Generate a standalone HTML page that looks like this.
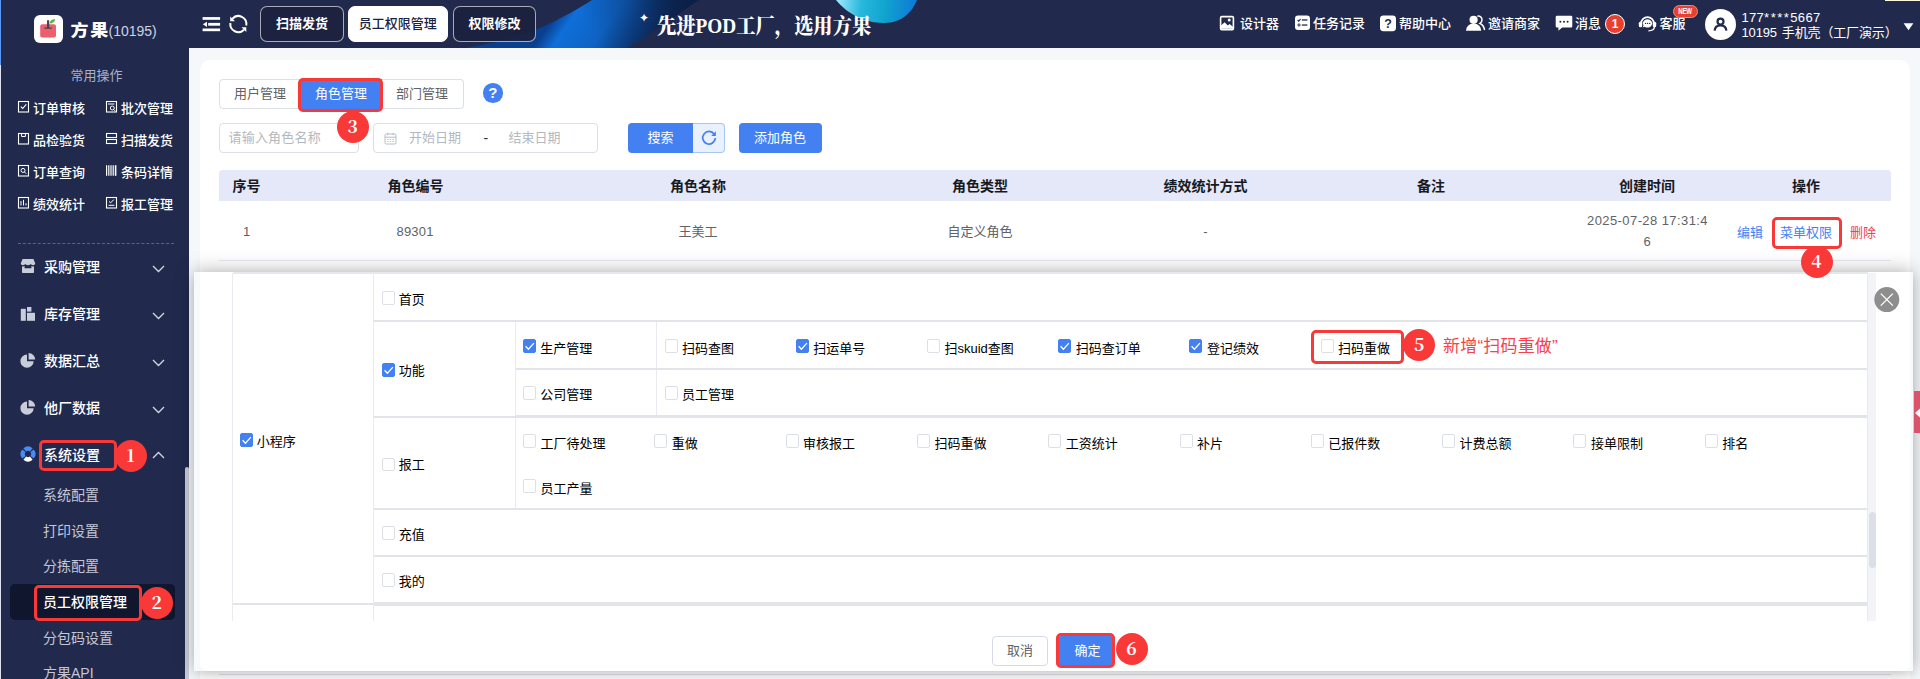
<!DOCTYPE html>
<html lang="zh-CN">
<head>
<meta charset="utf-8">
<title>方果</title>
<style>
*{box-sizing:border-box;margin:0;padding:0}
html,body{width:1920px;height:679px;overflow:hidden}
body{position:relative;background:#f6f7fb;font-family:"Liberation Sans","Noto Sans CJK SC",sans-serif;font-size:13px;color:#303133}
.abs{position:absolute}
.t{position:absolute;white-space:nowrap;line-height:20px;height:20px}
/* header */
#hd{position:absolute;left:0;top:0;width:1920px;height:48px;background:#212a4d;overflow:hidden}
#sb{position:absolute;left:0;top:48px;width:189px;height:631px;background:#212a4d;overflow:hidden}
.htab{position:absolute;top:6px;height:36px;border:1px solid rgba(255,255,255,.62);border-radius:7px;background:#1c2240;color:#fff;font-weight:700;font-size:13px;line-height:34px;text-align:center}
.htab.on{background:#fff;color:#1b2140;border-color:#fff;font-weight:500}
.hi{position:absolute;top:14px;height:20px;line-height:20px;color:#fff;font-size:13px;white-space:nowrap;font-weight:500}
/* sidebar */
.q{position:absolute;color:#fff;font-size:13px;font-weight:500;line-height:20px;height:20px;white-space:nowrap}
.m1{position:absolute;left:44px;color:#fff;font-size:14px;font-weight:500;line-height:20px;height:20px;white-space:nowrap}
.m2{position:absolute;left:43px;color:#c3c7d6;font-size:14px;line-height:20px;height:20px;white-space:nowrap}
/* card */
#card{position:absolute;left:200px;top:60px;width:1710px;height:640px;background:#fff;border-radius:10px}
.tab{position:absolute;top:79px;height:30px;line-height:28px;font-size:13px;color:#606266;text-align:center;border:1px solid #dcdfe6;background:#fff}
.inp{position:absolute;top:123px;height:30px;border:1px solid #dcdfe6;border-radius:4px;background:#fff}
.ph{position:absolute;color:#b4b8c0;font-size:13px;line-height:28px;top:0;white-space:nowrap}
.btn{position:absolute;top:123px;height:30px;line-height:30px;background:#4381f3;color:#fff;font-size:13px;text-align:center;border-radius:4px}
.th{position:absolute;top:176px;height:20px;line-height:20px;font-size:14px;font-weight:700;color:#17191f;white-space:nowrap}
.td{position:absolute;height:20px;line-height:20px;font-size:13px;color:#606266;white-space:nowrap}
.c{transform:translateX(-50%)}
/* dialog */
#dlg{position:absolute;left:194px;top:272px;width:1719px;height:399px;background:#fff;border-radius:0;box-shadow:0 -1px 18px rgba(0,0,0,.3),0 4px 10px rgba(0,0,0,.06)}
.ln{position:absolute;background:#e5e7ed}
.cb{position:absolute;width:13px;height:13.500px;border:1px solid #dcdfe6;border-radius:2px;background:#fff}
.cb.on{background:#4381f3;border-color:#4381f3;height:14px}
.lb{position:absolute;height:20px;line-height:20px;font-size:13px;color:#000;white-space:nowrap}
/* annotations */
.rb{position:absolute;border:3.800px solid #f93838;border-radius:5px}
.rc{position:absolute;width:32px;height:32px;border-radius:50%;background:#f93838;color:#fff;font-family:"Noto Serif CJK SC","Liberation Serif",serif;font-weight:700;font-size:17.500px;line-height:30px;text-align:center}
</style>
</head>
<body>
<div id="hd">
<svg class="abs" style="left:440px;top:0" width="500" height="48" viewBox="440 0 500 48">
<defs>
<linearGradient id="sw" gradientUnits="userSpaceOnUse" x1="560" y1="8" x2="640" y2="62">
<stop offset="0" stop-color="#0a3f90"/><stop offset=".16" stop-color="#0f6fd8"/><stop offset=".5" stop-color="#0e63c4"/><stop offset=".82" stop-color="#0b3b7e"/><stop offset="1" stop-color="#15274f"/>
</linearGradient>
<linearGradient id="swf" gradientUnits="userSpaceOnUse" x1="600" y1="48" x2="690" y2="0">
<stop offset="0" stop-color="#0a2450" stop-opacity="0"/><stop offset=".45" stop-color="#0a2450" stop-opacity=".3"/><stop offset="1" stop-color="#091f48" stop-opacity=".92"/>
</linearGradient>
<linearGradient id="bl" gradientUnits="userSpaceOnUse" x1="838" y1="0" x2="916" y2="8">
<stop offset="0" stop-color="#9be6fb"/><stop offset=".3" stop-color="#27b9dd"/><stop offset=".62" stop-color="#10a3cd"/><stop offset="1" stop-color="#0f78d8"/>
</linearGradient>
</defs>
<path d="M466 48 C500 42 522 36 540 28 C562 18 578 9 592 0 L699 0 C684 10 668 22 656 30 C646 37 636 43 627 48 Z" fill="url(#sw)"/>
<path d="M466 48 C500 42 522 36 540 28 C562 18 578 9 592 0 L699 0 C684 10 668 22 656 30 C646 37 636 43 627 48 Z" fill="url(#swf)"/>
<path d="M836 0 C846 12 862 23 884 23 C902 23 912 12 917 0 Z" fill="url(#bl)"/>
</svg>
<div class="abs" style="left:0;top:0;width:1px;height:48px;background:#5b98f5"></div>
<!-- logo -->
<div class="abs" style="left:34px;top:15px;width:29px;height:28px;background:#fff;border-radius:6px"></div>
<svg class="abs" style="left:34px;top:15px" width="29" height="28" viewBox="0 0 29 28">
<rect x="6.2" y="9.2" width="15.8" height="13.4" rx="2" fill="#ee5f6e"/>
<path d="M13 5.2h2.2v7.2h2.6v1.3h-7.4v-1.3h2.6z" fill="#3b484c"/>
<path d="M15.6 8.6c.2-2.6 2-4.4 5.6-4.5c-.2 2.8-2.2 4.6-5.6 4.5z" fill="#5fb548"/>
</svg>
<div class="t" style="left:70.500px;top:18.500px;height:24px;line-height:24px;font-size:18px;font-weight:900;color:#fff;letter-spacing:1.800px;transform:scaleY(.91)">方果</div>
<div class="t" style="left:108.5px;top:21px;font-size:14px;color:#cdd2e4">(10195)</div>
<!-- hamburger -->
<svg class="abs" style="left:202px;top:16px" width="19" height="16" viewBox="0 0 19 16">
<rect x="0.600" y="1.100" width="17.500" height="2.700" fill="#fff"/><rect x="6.200" y="6.900" width="11.900" height="2.800" fill="#fff"/><rect x="0.600" y="12.500" width="17.500" height="2.700" fill="#fff"/><path d="M0.800 8.300L5 5.700v5.200z" fill="#fff"/>
</svg>
<!-- refresh -->
<svg class="abs" style="left:228px;top:13px" width="22" height="22" viewBox="0 0 22 22">
<g fill="none" stroke="#fff" stroke-width="2">
<path d="M4.300 5.800A8 8 0 0 1 18.200 12.500"/>
<path d="M16 16.700A8 8 0 0 1 2.400 10"/>
</g>
<path d="M2.200 3.400v4.800h4.800z" fill="#fff"/>
<path d="M18.300 19.100v-4.800h-4.800z" fill="#fff"/>
</svg>
<div class="htab" style="left:260px;width:84px">扫描发货</div>
<div class="htab on" style="left:347.5px;width:100.5px">员工权限管理</div>
<div class="htab" style="left:453px;width:83px;background:rgba(27,33,62,.9)">权限修改</div>
<!-- banner text -->
<div class="t" style="left:638.5px;top:8px;font-size:12px;color:#fff">✦</div>
<div class="t" id="bn" style="left:657px;top:10.600px;height:30px;line-height:30px;font-family:'Liberation Serif','Noto Serif CJK SC',serif;font-weight:900;font-size:21px;color:#fff;transform-origin:0 50%;transform:scaleX(.918)">先进POD工厂，选用方果</div>
<!-- 设计器 -->
<svg class="abs" style="left:1219px;top:15px" width="16" height="16" viewBox="0 0 16 16">
<rect x="1.6" y="1.6" width="12.8" height="13" rx="1.2" fill="none" stroke="#fff" stroke-width="1.6"/>
<path d="M2 13.8V10.6l3.6-3.4 3.2 3.4 1.8-1.6 3.6 3v1.8z" fill="#fff"/>
<circle cx="10.2" cy="5" r="1.5" fill="#fff"/>
</svg>
<div class="hi" style="left:1240px">设计器</div>
<!-- 任务记录 -->
<svg class="abs" style="left:1294px;top:15px" width="17" height="16" viewBox="0 0 17 16">
<rect x="1" y="0.5" width="15" height="14.6" rx="3" fill="#fff"/>
<path d="M3.6 5l1.1 1.1 1.9-2" fill="none" stroke="#212a4d" stroke-width="1.1"/>
<rect x="7.8" y="4.3" width="5.6" height="1.3" fill="#212a4d"/>
<circle cx="5" cy="10" r="1.1" fill="none" stroke="#212a4d" stroke-width="1"/>
<rect x="7.8" y="9.4" width="5.6" height="1.3" fill="#212a4d"/>
</svg>
<div class="hi" style="left:1313px">任务记录</div>
<!-- 帮助中心 -->
<svg class="abs" style="left:1379px;top:15px" width="18" height="17" viewBox="0 0 18 17">
<rect x="1" y="0.4" width="16" height="15.8" rx="3.4" fill="#fff"/>
<text x="9" y="12.6" text-anchor="middle" font-family="Liberation Sans,sans-serif" font-weight="700" font-size="12.5" fill="#212a4d">?</text>
</svg>
<div class="hi" style="left:1399px">帮助中心</div>
<!-- 邀请商家 -->
<svg class="abs" style="left:1465px;top:15px" width="21" height="17" viewBox="0 0 21 17">
<path d="M12.4 1.2c2.6-.6 4.6 1.2 4.6 3.6 0 1.700-.9 3-2 3.700 2.200.9 3.900 2.800 4.600 6.500" fill="none" stroke="#fff" stroke-width="1.5"/>
<circle cx="8.6" cy="4.800" r="4.100" fill="#fff"/>
<path d="M1 15.800c.3-4.300 3.300-7.200 7.600-7.200s7.300 2.900 7.600 7.200z" fill="#fff"/>
</svg>
<div class="hi" style="left:1488px">邀请商家</div>
<!-- 消息 -->
<svg class="abs" style="left:1555px;top:15px" width="18" height="17" viewBox="0 0 18 17">
<path d="M2 .8h14a1.300 1.300 0 0 1 1.300 1.300v9.200a1.300 1.300 0 0 1-1.300 1.300H7.200L3.400 15.800V12.600H2A1.300 1.300 0 0 1 .7 11.300V2.100A1.300 1.300 0 0 1 2 .8z" fill="#fff"/>
<circle cx="5.400" cy="6.700" r="1" fill="#212a4d"/><circle cx="9" cy="6.700" r="1" fill="#212a4d"/><circle cx="12.600" cy="6.700" r="1" fill="#212a4d"/>
</svg>
<div class="hi" style="left:1575px">消息</div>
<div class="abs" style="left:1605px;top:14px;width:20px;height:20px;border-radius:50%;background:#e8402f;border:1px solid #fff;color:#fff;font-size:12px;font-weight:700;line-height:18px;text-align:center">1</div>
<!-- 客服 -->
<svg class="abs" style="left:1638px;top:15px" width="19" height="17" viewBox="0 0 19 17">
<path d="M3.200 8.400a6.300 6.300 0 0 1 12.600 0" fill="none" stroke="#fff" stroke-width="1.700"/>
<rect x="0.800" y="6.800" width="3.400" height="5.400" rx="1.500" fill="#fff"/>
<rect x="14.800" y="6.800" width="3.400" height="5.400" rx="1.500" fill="#fff"/>
<path d="M16.400 11.800c0 2.800-2.600 4-6 4" fill="none" stroke="#fff" stroke-width="1.300"/>
<path d="M9.500 4.200a4.600 4.200 0 1 1-2.800 7.500l-2 .9.800-2.200A4.600 4.200 0 0 1 9.500 4.200z" fill="#fff"/>
<circle cx="7.500" cy="8.400" r=".7" fill="#212a4d"/><circle cx="9.600" cy="8.400" r=".7" fill="#212a4d"/><circle cx="11.700" cy="8.400" r=".7" fill="#212a4d"/>
</svg>
<div class="hi" style="left:1659.500px">客服</div>
<div class="abs" style="left:1673px;top:5px;width:24.500px;height:13px;border-radius:7px;background:#e8402f;border:1px solid #f08a7a;color:#fff;font-size:9px;font-weight:700;line-height:11px;text-align:center;letter-spacing:-.3px"><span style="display:inline-block;transform:scaleX(.68)">NEW</span></div>
<div class="abs" style="left:1885px;top:0;width:35px;height:1px;background:#fff7e0"></div>
<!-- avatar -->
<div class="abs" style="left:1705px;top:8.500px;width:31px;height:31px;border-radius:50%;background:#fff"></div>
<svg class="abs" style="left:1705px;top:8.500px" width="31" height="31" viewBox="0 0 31 31">
<circle cx="15.500" cy="12.600" r="3" fill="none" stroke="#212a4d" stroke-width="2.200"/>
<path d="M9.600 21.600c.4-3.400 2.700-5.200 5.900-5.200s5.500 1.800 5.900 5.200" fill="none" stroke="#212a4d" stroke-width="2.200"/>
</svg>
<div class="t" style="left:1741.500px;top:8.300px;font-size:13px;color:#fff;letter-spacing:.3px">177<span style="letter-spacing:1.500px">****</span>5667</div>
<div class="t" style="left:1741.500px;top:22.800px;font-size:13px;color:#fff;word-spacing:1.500px;letter-spacing:-.15px">10195 手机壳（工厂演示）</div>
<svg class="abs" style="left:1903px;top:23px" width="11" height="8" viewBox="0 0 11 8"><path d="M.6.300h9.800L5.500 7.200z" fill="#fff"/></svg>

</div>
<div id="sb">
<div class="abs" style="left:0;top:0;width:1px;height:17px;background:#5b98f5"></div><div class="abs" style="left:0;top:17px;width:1px;height:614px;background:#dfe2ee"></div>
<div class="t c" style="left:96.500px;top:18px;font-size:13px;color:#aab1cb">常用操作</div>
<!-- quick icons : y offsets relative to sidebar (page y - 48) -->
<svg class="abs" style="left:17px;top:52px" width="13" height="13" viewBox="0 0 13 13"><rect x="1.500" y="1.500" width="10" height="10.500" fill="none" stroke="#fff" stroke-width="1.100"/><path d="M3.800 6.600l1.900 1.900 3.600-4.200" fill="none" stroke="#fff" stroke-width="1.100"/></svg>
<div class="q" style="left:33px;top:50.700px">订单审核</div>
<svg class="abs" style="left:105px;top:52px" width="13" height="13" viewBox="0 0 13 13"><rect x="1.500" y="1.500" width="10" height="10.500" fill="none" stroke="#fff" stroke-width="1.100"/><path d="M3 4h6.500" stroke="#fff" stroke-width="1"/><circle cx="7.300" cy="8" r="2" fill="none" stroke="#fff" stroke-width="1"/><path d="M8.800 9.600l1.700 1.700" stroke="#fff" stroke-width="1"/></svg>
<div class="q" style="left:121px;top:50.700px">批次管理</div>

<svg class="abs" style="left:17px;top:84px" width="13" height="13" viewBox="0 0 13 13"><rect x="1.500" y="1.500" width="10" height="10.500" fill="none" stroke="#fff" stroke-width="1.100"/><path d="M4.600 1.500v3h3.800v-3" fill="none" stroke="#fff" stroke-width="1"/></svg>
<div class="q" style="left:33px;top:82.700px">品检验货</div>
<svg class="abs" style="left:105px;top:84px" width="13" height="13" viewBox="0 0 13 13"><rect x="1.500" y="1.500" width="10" height="4" fill="none" stroke="#fff" stroke-width="1.100"/><rect x="1.500" y="7.500" width="10" height="4" fill="none" stroke="#fff" stroke-width="1.100"/></svg>
<div class="q" style="left:121px;top:82.700px">扫描发货</div>

<svg class="abs" style="left:17px;top:116px" width="13" height="13" viewBox="0 0 13 13"><rect x="1.500" y="1.500" width="10" height="10.500" fill="none" stroke="#fff" stroke-width="1.100"/><circle cx="6" cy="6.400" r="2" fill="none" stroke="#fff" stroke-width="1"/><path d="M7.500 8l1.700 1.700" stroke="#fff" stroke-width="1"/></svg>
<div class="q" style="left:33px;top:114.700px">订单查询</div>
<svg class="abs" style="left:105px;top:116px" width="13" height="13" viewBox="0 0 13 13"><path d="M1.600 1.200v10.600M3.800 1.200v10.600M6 1.200v10.600M8.200 1.200v10.600" stroke="#fff" stroke-width="1.200"/><path d="M10.600 1.200v10.600" stroke="#fff" stroke-width="1.600"/></svg>
<div class="q" style="left:121px;top:114.700px">条码详情</div>

<svg class="abs" style="left:17px;top:148px" width="13" height="13" viewBox="0 0 13 13"><rect x="1.500" y="1.500" width="10" height="10.500" fill="none" stroke="#fff" stroke-width="1.100"/><path d="M4 5v4.500M6.500 3.800v5.700M9 7.200v2.300" stroke="#fff" stroke-width="1"/></svg>
<div class="q" style="left:33px;top:146.700px">绩效统计</div>
<svg class="abs" style="left:105px;top:148px" width="13" height="13" viewBox="0 0 13 13"><rect x="1.500" y="1.500" width="10" height="10.500" fill="none" stroke="#fff" stroke-width="1.100"/><path d="M4 5.400l1.600 1.500 3.200-3.300" fill="none" stroke="#fff" stroke-width="1"/><path d="M3.600 9.300h5.800" stroke="#fff" stroke-width="1"/></svg>
<div class="q" style="left:121px;top:146.700px">报工管理</div>

<div class="abs" style="left:18px;top:195px;width:156px;height:0;border-top:1px dashed #5a6388"></div>

<!-- menu -->
<svg class="abs" style="left:20px;top:210px" width="16" height="16" viewBox="0 0 16 16"><path d="M2.600 1h10.800l1.800 4.200c0 1.300-1 2-2.200 2-1 0-1.700-.5-2.200-1.200-.5.700-1.500 1.200-2.800 1.200s-2.300-.5-2.800-1.200C4.700 6.700 4 7.200 3 7.200 1.800 7.200.800 6.500.800 5.200z" fill="#c9ccd9"/><path d="M2 8.400c.3.100.7.100 1 .100.700 0 1.200-.1 1.600-.4v2.200h6.800V8.100c.4.300.9.400 1.600.4.300 0 .7 0 1-.1V14c0 .6-.4 1-1 1H3c-.6 0-1-.4-1-1z" fill="#c9ccd9"/></svg>
<div class="m1" style="top:208.500px">采购管理</div>
<svg class="abs" style="left:20px;top:258px" width="16" height="16" viewBox="0 0 16 16"><rect x="0.800" y="2.800" width="5" height="12" fill="#c9ccd9"/><rect x="7" y="1" width="4.400" height="4.600" fill="#c9ccd9"/><rect x="7" y="6.800" width="8" height="8" fill="#c9ccd9"/></svg>
<div class="m1" style="top:255.500px">库存管理</div>
<svg class="abs" style="left:20px;top:304px" width="16" height="16" viewBox="0 0 16 16"><path d="M7 2.600v6.600h6.600A6.600 6.600 0 1 1 7 2.600z" fill="#c9ccd9"/><path d="M8.600 1a6.600 6.600 0 0 1 6.600 6.600H8.600z" fill="#c9ccd9"/></svg>
<div class="m1" style="top:302.500px">数据汇总</div>
<svg class="abs" style="left:20px;top:351px" width="16" height="16" viewBox="0 0 16 16"><path d="M7 2.600v6.600h6.600A6.600 6.600 0 1 1 7 2.600z" fill="#c9ccd9"/><path d="M8.600 1a6.600 6.600 0 0 1 6.600 6.600H8.600z" fill="#c9ccd9"/></svg>
<div class="m1" style="top:349.500px">他厂数据</div>
<svg class="abs" style="left:19.500px;top:398.400px" width="16" height="16" viewBox="0 0 16 16"><g fill="none" stroke-width="4.300"><path d="M11.270 12.110A5.250 5.250 0 0 1 4.730 12.110" stroke="#fff"/><path d="M3.890 11.270A5.250 5.250 0 0 1 3.890 4.730" stroke="#4a8cf5"/><path d="M4.730 3.890A5.250 5.250 0 0 1 11.270 3.890" stroke="#4a8cf5"/><path d="M12.110 4.730A5.250 5.250 0 0 1 12.110 11.270" stroke="#4a8cf5"/></g></svg>
<div class="m1" style="top:397px">系统设置</div>
<!-- chevrons -->
<svg class="abs" style="left:152px;top:217px" width="13" height="8" viewBox="0 0 13 8"><path d="M1 1l5.500 5.500L12 1" fill="none" stroke="#d5d8e4" stroke-width="1.300"/></svg>
<svg class="abs" style="left:152px;top:264px" width="13" height="8" viewBox="0 0 13 8"><path d="M1 1l5.500 5.500L12 1" fill="none" stroke="#d5d8e4" stroke-width="1.300"/></svg>
<svg class="abs" style="left:152px;top:311px" width="13" height="8" viewBox="0 0 13 8"><path d="M1 1l5.500 5.500L12 1" fill="none" stroke="#d5d8e4" stroke-width="1.300"/></svg>
<svg class="abs" style="left:152px;top:358px" width="13" height="8" viewBox="0 0 13 8"><path d="M1 1l5.500 5.500L12 1" fill="none" stroke="#d5d8e4" stroke-width="1.300"/></svg>
<svg class="abs" style="left:152px;top:403px" width="13" height="8" viewBox="0 0 13 8"><path d="M1 7l5.500-5.500L12 7" fill="none" stroke="#d5d8e4" stroke-width="1.300"/></svg>
<!-- submenu -->
<div class="abs" style="left:10px;top:536px;width:165px;height:36px;border-radius:5px;background:#11162f"></div>
<div class="m2" style="top:437px">系统配置</div>
<div class="m2" style="top:473px">打印设置</div>
<div class="m2" style="top:508px">分拣配置</div>
<div class="m2" style="top:544px;color:#fff;font-weight:500">员工权限管理</div>
<div class="m2" style="top:580px">分包码设置</div>
<div class="m2" style="top:614.500px">方果API</div>
<!-- sidebar scrollbar -->
<div class="abs" style="left:185px;top:419px;width:4px;height:215px;background:#c9ccd6;border-radius:2px 2px 0 0"></div>
</div>
<div id="card"></div>
<!-- tabs -->
<div class="tab" style="left:219px;width:82px;border-radius:4px 0 0 4px">用户管理</div>
<div class="tab" style="left:381px;width:83px;border-radius:0 4px 4px 0;border-left:none">部门管理</div>
<div class="tab" style="left:300px;width:82px;background:#4381f3;border-color:#4381f3;color:#fff">角色管理</div>
<!-- help -->
<div class="abs" style="left:483px;top:83px;width:19.500px;height:19.500px;border-radius:50%;background:#4381f3;color:#fff;font-weight:700;font-size:15px;line-height:20px;text-align:center">?</div>
<!-- inputs -->
<div class="inp" style="left:219px;width:140px"><div class="ph" style="left:8.500px;letter-spacing:.2px">请输入角色名称</div></div>
<div class="inp" style="left:373px;width:225px">
<svg class="abs" style="left:10px;top:7.500px" width="13" height="13" viewBox="0 0 13 13"><rect x="1" y="2" width="11" height="10" rx="1.200" fill="none" stroke="#b9bcc5" stroke-width="1"/><path d="M1 5.200h11M3.800 .8v2.400M9.200 .8v2.400" stroke="#b9bcc5" stroke-width="1"/><path d="M3.200 7.400h1.400M5.800 7.400h1.400M8.400 7.400h1.400M3.200 9.600h1.400M5.800 9.600h1.400M8.400 9.600h1.400" stroke="#b9bcc5" stroke-width="1"/></svg>
<div class="ph" style="left:35px">开始日期</div><div class="ph" style="left:109.500px;color:#303133;font-size:14px">-</div><div class="ph" style="left:134.500px">结束日期</div></div>
<div class="btn" style="left:628px;width:65px;border-radius:4px 0 0 4px">搜索</div>
<div class="btn" style="left:693px;width:32px;border-radius:0 4px 4px 0;background:#e9f0fe;border:1px solid #a9c6fa;border-left:none"></div>
<svg class="abs" style="left:700px;top:129px" width="18" height="18" viewBox="0 0 18 18"><path d="M14.200 5.200A6.300 6.300 0 1 0 15.300 9" fill="none" stroke="#4381f3" stroke-width="1.700"/><path d="M15.900 2.200v4.700h-4.700z" fill="#4381f3"/></svg>
<div class="btn" style="left:738.500px;width:83px">添加角色</div>
<!-- table header -->
<div class="abs" style="left:219px;top:170px;width:1672px;height:31px;background:#e4e8f8;border-radius:4px 4px 0 0"></div>
<div class="th" style="left:232.500px">序号</div>
<div class="th" style="left:387.500px">角色编号</div>
<div class="th c" style="left:698px">角色名称</div>
<div class="th c" style="left:980px">角色类型</div>
<div class="th c" style="left:1205.500px">绩效统计方式</div>
<div class="th c" style="left:1431px">备注</div>
<div class="th c" style="left:1647px">创建时间</div>
<div class="th c" style="left:1806px">操作</div>
<!-- row -->
<div class="td" style="left:243px;top:221.700px">1</div>
<div class="td" style="left:396.500px;top:221.700px;letter-spacing:.2px">89301</div>
<div class="td c" style="left:698px;top:221.500px">王美工</div>
<div class="td c" style="left:980px;top:221.500px">自定义角色</div>
<div class="td c" style="left:1205.500px;top:221.500px">-</div>
<div class="td c" style="left:1647.500px;top:210.500px;letter-spacing:.42px">2025-07-28 17:31:4</div>
<div class="td c" style="left:1647px;top:232px">6</div>
<div class="td c" style="left:1750px;top:223px;color:#4381f3">编辑</div>
<div class="td c" style="left:1806px;top:223px;color:#4381f3">菜单权限</div>
<div class="td c" style="left:1863px;top:223px;color:#f5424c">删除</div>
<div class="abs" style="left:219px;top:260px;width:1672px;height:1px;background:#e6e9f2"></div>
<div class="abs" style="left:219px;top:674px;width:1672px;height:1px;background:#e0e3ec"></div>
<div id="dlg"></div>
<div class="abs" style="left:194px;top:272px;width:12px;height:399px;background:#f8f9fd"></div>
<div class="abs" style="left:199.500px;top:272px;width:40px;height:399px;background:#fff;border-radius:0 0 0 7px"></div>
<div class="abs" style="left:1900px;top:272px;width:13px;height:399px;background:#f8f9fd"></div>
<div class="abs" style="left:1880px;top:272px;width:29.500px;height:399px;background:#fff;border-radius:0 0 7px 0"></div>
<div class="abs" style="left:1868px;top:273px;width:8px;height:348px;background:#f3f4f7"></div>
<div class="abs" style="left:1869px;top:512px;width:7px;height:56px;border-radius:4px;background:#dcdfe8"></div>
<div class="ln" style="left:233px;top:272px;width:1635px;height:2px;background:#e6e8ed"></div>
<div class="ln" style="left:232px;top:273px;width:1px;height:348px;background:#e9ebf1"></div>
<div class="ln" style="left:373px;top:273px;width:1px;height:348px;background:#e9ebf1"></div>
<div class="ln" style="left:515px;top:321px;width:1px;height:188px;background:#e9ebf1"></div>
<div class="ln" style="left:656px;top:321px;width:1px;height:95px;background:#e9ebf1"></div>
<div class="ln" style="left:1867px;top:273px;width:1px;height:348px;background:#e9ebf1"></div>
<div class="ln" style="left:374px;top:320px;width:1493px;height:2px;background:#e2e4ea"></div>
<div class="ln" style="left:516px;top:368px;width:1351px;height:2px;background:#e2e4ea"></div>
<div class="ln" style="left:374px;top:416px;width:142px;height:2px;background:#e2e4ea"></div>
<div class="ln" style="left:516px;top:415px;width:1351px;height:3px;background:#e2e4ea"></div>
<div class="ln" style="left:374px;top:508px;width:1493px;height:2px;background:#e2e4ea"></div>
<div class="ln" style="left:374px;top:555px;width:1493px;height:2px;background:#e2e4ea"></div>
<div class="ln" style="left:233px;top:603px;width:141px;height:2px;background:#e2e4ea"></div>
<div class="ln" style="left:374px;top:602px;width:1493px;height:4px;background:#e2e4ea"></div>
<div class="cb on" style="left:240px;top:432.5px"><svg width="13" height="14" viewBox="0 0 13 14" style="position:absolute;left:-1px;top:-1px"><path d="M2.600 7.200l2.800 3 5.500-6.100" fill="none" stroke="#fff" stroke-width="1.300"/></svg></div>
<div class="lb" style="left:256.8px;top:431.5px">小程序</div>
<div class="cb" style="left:382px;top:291px"></div>
<div class="lb" style="left:398.8px;top:290px">首页</div>
<div class="cb on" style="left:382px;top:363px"><svg width="13" height="14" viewBox="0 0 13 14" style="position:absolute;left:-1px;top:-1px"><path d="M2.600 7.200l2.800 3 5.500-6.100" fill="none" stroke="#fff" stroke-width="1.300"/></svg></div>
<div class="lb" style="left:398.8px;top:361px">功能</div>
<div class="cb" style="left:382px;top:457.5px"></div>
<div class="lb" style="left:398.8px;top:455px">报工</div>
<div class="cb" style="left:382px;top:526px"></div>
<div class="lb" style="left:398.8px;top:525px">充值</div>
<div class="cb" style="left:382px;top:573px"></div>
<div class="lb" style="left:398.8px;top:572px">我的</div>
<div class="cb on" style="left:523px;top:339px"><svg width="13" height="14" viewBox="0 0 13 14" style="position:absolute;left:-1px;top:-1px"><path d="M2.600 7.200l2.800 3 5.500-6.100" fill="none" stroke="#fff" stroke-width="1.300"/></svg></div>
<div class="lb" style="left:540.3px;top:338.5px">生产管理</div>
<div class="cb" style="left:523px;top:386px"></div>
<div class="lb" style="left:540.3px;top:385px">公司管理</div>
<div class="cb" style="left:664.5px;top:339px"></div>
<div class="lb" style="left:682.1px;top:338.5px">扫码查图</div>
<div class="cb on" style="left:795.7px;top:339px"><svg width="13" height="14" viewBox="0 0 13 14" style="position:absolute;left:-1px;top:-1px"><path d="M2.600 7.200l2.800 3 5.500-6.100" fill="none" stroke="#fff" stroke-width="1.300"/></svg></div>
<div class="lb" style="left:813.3px;top:338.5px">扫运单号</div>
<div class="cb" style="left:926.9px;top:339px"></div>
<div class="lb" style="left:944.5px;top:338.5px">扫skuid查图</div>
<div class="cb on" style="left:1058.1px;top:339px"><svg width="13" height="14" viewBox="0 0 13 14" style="position:absolute;left:-1px;top:-1px"><path d="M2.600 7.200l2.800 3 5.500-6.100" fill="none" stroke="#fff" stroke-width="1.300"/></svg></div>
<div class="lb" style="left:1075.7px;top:338.5px">扫码查订单</div>
<div class="cb on" style="left:1189.3px;top:339px"><svg width="13" height="14" viewBox="0 0 13 14" style="position:absolute;left:-1px;top:-1px"><path d="M2.600 7.200l2.800 3 5.500-6.100" fill="none" stroke="#fff" stroke-width="1.300"/></svg></div>
<div class="lb" style="left:1206.9px;top:338.5px">登记绩效</div>
<div class="cb" style="left:1320.5px;top:339px"></div>
<div class="lb" style="left:1338.1px;top:338.5px">扫码重做</div>
<div class="cb" style="left:664.5px;top:386px"></div>
<div class="lb" style="left:682.1px;top:385px">员工管理</div>
<div class="cb" style="left:523.0px;top:434px"></div>
<div class="lb" style="left:540.5px;top:433.5px">工厂待处理</div>
<div class="cb" style="left:654.3px;top:434px"></div>
<div class="lb" style="left:671.8px;top:433.5px">重做</div>
<div class="cb" style="left:785.6px;top:434px"></div>
<div class="lb" style="left:803.1px;top:433.5px">审核报工</div>
<div class="cb" style="left:916.9px;top:434px"></div>
<div class="lb" style="left:934.4px;top:433.5px">扫码重做</div>
<div class="cb" style="left:1048.2px;top:434px"></div>
<div class="lb" style="left:1065.7px;top:433.5px">工资统计</div>
<div class="cb" style="left:1179.5px;top:434px"></div>
<div class="lb" style="left:1197.0px;top:433.5px">补片</div>
<div class="cb" style="left:1310.8px;top:434px"></div>
<div class="lb" style="left:1328.3px;top:433.5px">已报件数</div>
<div class="cb" style="left:1442.1px;top:434px"></div>
<div class="lb" style="left:1459.6px;top:433.5px">计费总额</div>
<div class="cb" style="left:1573.4px;top:434px"></div>
<div class="lb" style="left:1590.9px;top:433.5px">接单限制</div>
<div class="cb" style="left:1704.7px;top:434px"></div>
<div class="lb" style="left:1722.2px;top:433.5px">排名</div>
<div class="cb" style="left:523px;top:479px"></div>
<div class="lb" style="left:540.5px;top:478.5px">员工产量</div>
<svg class="abs" style="left:1874px;top:287px" width="26" height="26" viewBox="0 0 26 26"><circle cx="12.800" cy="12.600" r="12.500" fill="#8e8e8e"/><path d="M6.800 6.600l12 12M18.800 6.600l-12 12" stroke="#fff" stroke-width="1.300"/></svg>
<div class="abs" style="left:992px;top:636px;width:56px;height:30px;border:1px solid #d6dae6;border-radius:4px;background:#fff;color:#606266;font-size:13px;line-height:28px;text-align:center">取消</div>
<div class="abs" style="left:1058px;top:636px;width:56px;height:30px;border-radius:3px;background:#4381f3;color:#fff;font-size:13px;line-height:30px;text-align:center;padding-left:3px">确定</div>
<div class="abs" style="left:1914px;top:391px;width:6px;height:42px;background:#d9536b"></div>
<svg class="abs" style="left:1914px;top:406.500px" width="6" height="12" viewBox="0 0 6 12"><path d="M6 1.500v9L1 6z" fill="#fff"/></svg>
<div class="rb" style="left:39px;top:440px;width:78px;height:31px"></div>
<div class="rc" style="left:114.500px;top:439.700px">1</div>
<div class="rb" style="left:34px;top:584.500px;width:107.500px;height:36.500px"></div>
<div class="rc" style="left:140.700px;top:587px">2</div>
<div class="rb" style="left:298px;top:78px;width:85px;height:34px"></div>
<div class="rc" style="left:336.800px;top:111px">3</div>
<div class="rb" style="left:1772px;top:217px;width:69.500px;height:32px"></div>
<div class="rc" style="left:1800.500px;top:245.600px">4</div>
<div class="rb" style="left:1311px;top:330px;width:93px;height:34px"></div>
<div class="rc" style="left:1403.100px;top:329.400px">5</div>
<div class="t" style="left:1443px;top:335px;height:24px;line-height:24px;font-size:17px;color:#f5424c;letter-spacing:.2px">新增“扫码重做”</div>
<div class="rb" style="left:1055.700px;top:633px;width:59.600px;height:34.500px"></div>
<div class="rc" style="left:1115.500px;top:633.300px">6</div>
</body></html>
